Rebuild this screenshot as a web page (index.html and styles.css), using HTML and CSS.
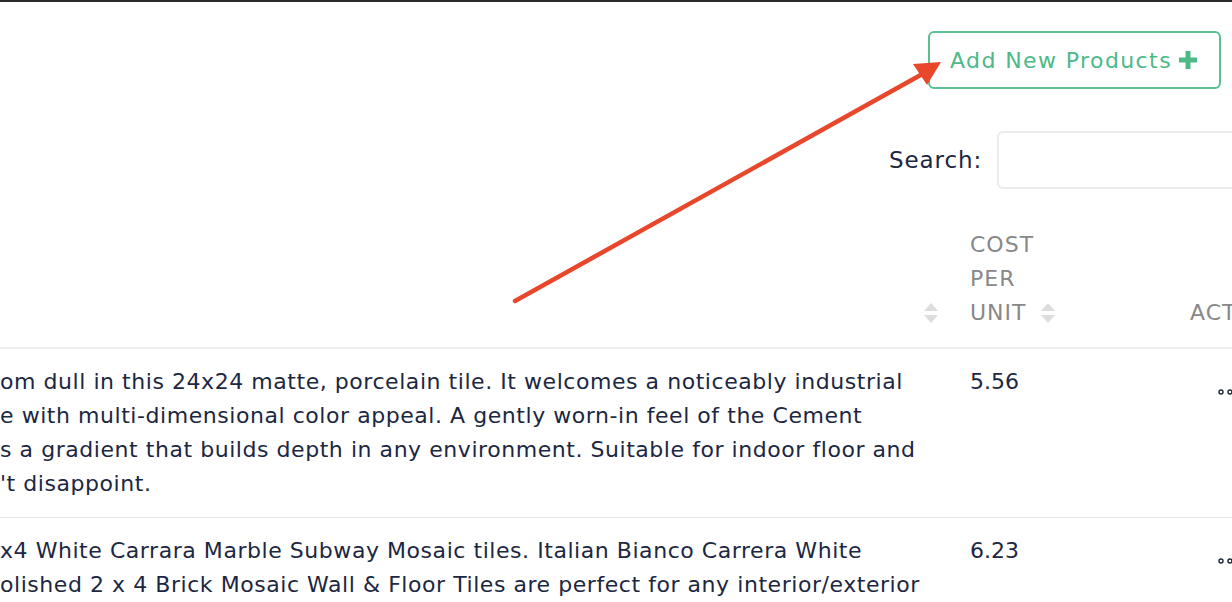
FILE: index.html
```html
<!DOCTYPE html>
<html lang="en">
<head>
    <meta charset="UTF-8">
    <meta name="viewport" content="width=device-width, initial-scale=1.0">
    <title>Products</title>
    <link rel="stylesheet" href="styles.css">
</head>
<body>
    <div class="page">
        <!-- top action -->
        <div class="toolbar">
            <button class="btn-add">Add New Products
                <svg class="plus" viewBox="0 0 18 18" width="18" height="18"><path d="M6.5 0h5v6.5H18v5h-6.5V18h-5v-6.5H0v-5h6.5z" fill="currentColor"/></svg>
            </button>
        </div>

        <div class="search">
            <label for="searchBox">Search:</label>
            <input id="searchBox" type="text">
        </div>

        <table class="products">
            <colgroup>
                <col class="c-desc">
                <col class="c-cost">
                <col class="c-act">
            </colgroup>
            <thead>
                <tr>
                    <th class="th-desc"><span class="sort"></span></th>
                    <th class="th-cost">COST<br>PER<br>UNIT<span class="sort"></span></th>
                    <th class="th-act">ACTIONS</th>
                </tr>
            </thead>
            <tbody>
                <tr>
                    <td class="desc">om dull in this 24x24 matte, porcelain tile. It welcomes a noticeably industrial<br>e with multi-dimensional color appeal. A gently worn-in feel of the Cement<br>s a gradient that builds depth in any environment. Suitable for indoor floor and<br>'t disappoint.</td>
                    <td class="cost">5.56</td>
                    <td class="act"><svg class="dots" viewBox="0 0 30 8" width="30" height="8"><circle cx="4" cy="4" r="2" /><circle cx="13" cy="4" r="2" /><circle cx="22" cy="4" r="2" /></svg></td>
                </tr>
                <tr>
                    <td class="desc">x4 White Carrara Marble Subway Mosaic tiles. Italian Bianco Carrera White<br>olished 2 x 4 Brick Mosaic Wall &amp; Floor Tiles are perfect for any interior/exterior</td>
                    <td class="cost">6.23</td>
                    <td class="act"><svg class="dots" viewBox="0 0 30 8" width="30" height="8"><circle cx="4" cy="4" r="2" /><circle cx="13" cy="4" r="2" /><circle cx="22" cy="4" r="2" /></svg></td>
                </tr>
            </tbody>
        </table>

        <!-- annotation arrow -->
        <svg class="arrow" width="1232" height="602" viewBox="0 0 1232 602">
            <line x1="515" y1="301" x2="926" y2="72" stroke="#e8472b" stroke-width="4.5" stroke-linecap="round"/>
            <polygon points="941,62 913,64 927,85" fill="#e8472b"/>
        </svg>
    </div>
</body>
</html>
```

FILE: styles.css
```css
body {
    margin: 0;
    border-top: 2px solid #2b2b2b;
    overflow: hidden;
    height: 600px;
    background: #fff;
    font-family: "DejaVu Sans", sans-serif;
    font-size: 22px;
    color: #1c2742;
}
.page {
    position: relative;
}
.toolbar {
    display: flex;
    justify-content: flex-end;
    padding: 29px 11px 0 0;
}
.btn-add {
    display: flex;
    align-items: center;
    gap: 7px;
    height: 58px;
    padding: 0 22px 0 20px;
    border: 2px solid #5cbf93;
    border-radius: 6px;
    background: #fff;
    color: #4cb987;
    font-family: inherit;
    font-size: 22px;
    letter-spacing: 1.4px;
    cursor: pointer;
}
.plus {
    display: block;
}
.search {
    display: flex;
    align-items: center;
    margin-top: 42px;
    margin-left: 889px;
}
.search label {
    margin-right: 15px;
    white-space: nowrap;
    font-size: 23px;
    letter-spacing: 0.9px;
}
.search input {
    flex: none;
    width: 320px;
    height: 58px;
    box-sizing: border-box;
    border: 2px solid #ececec;
    border-radius: 6px;
}
.products {
    margin-top: 22px;
    table-layout: fixed;
    width: 1400px;
    border-collapse: collapse;
    line-height: 34px;
}
.c-desc { width: 946px; }
.c-cost { width: 220px; }
.c-act { width: 234px; }
.products th {
    vertical-align: bottom;
    text-align: left;
    font-weight: 400;
    color: #888;
    letter-spacing: 1px;
    padding: 17px 0 17px 24px;
    border-bottom: 2px solid #eee;
}
.products th.th-desc {
    text-align: right;
    padding-right: 8px;
}
.sort {
    display: inline-block;
    position: relative;
    width: 14px;
    height: 20px;
    vertical-align: -3px;
    margin-left: 14px;
}
.sort::before,
.sort::after {
    content: "";
    position: absolute;
    left: 0;
    border-left: 7px solid transparent;
    border-right: 7px solid transparent;
}
.sort::before {
    top: 0;
    border-bottom: 8px solid #dddddd;
}
.sort::after {
    bottom: 0;
    border-top: 8px solid #dddddd;
}
.products td {
    vertical-align: top;
    padding: 16px 0 16px 24px;
    border-bottom: 1px solid #e8e8e8;
}
.products td.desc {
    padding-left: 0;
    white-space: nowrap;
    letter-spacing: 0.55px;
}
.products td.act {
    padding-left: 51px;
}
.dots {
    display: block;
    margin-top: 23px;
    fill: none;
    stroke: #1c2742;
    stroke-width: 1.4;
}
.arrow {
    position: absolute;
    top: -2px;
    left: 0;
    pointer-events: none;
}
```
